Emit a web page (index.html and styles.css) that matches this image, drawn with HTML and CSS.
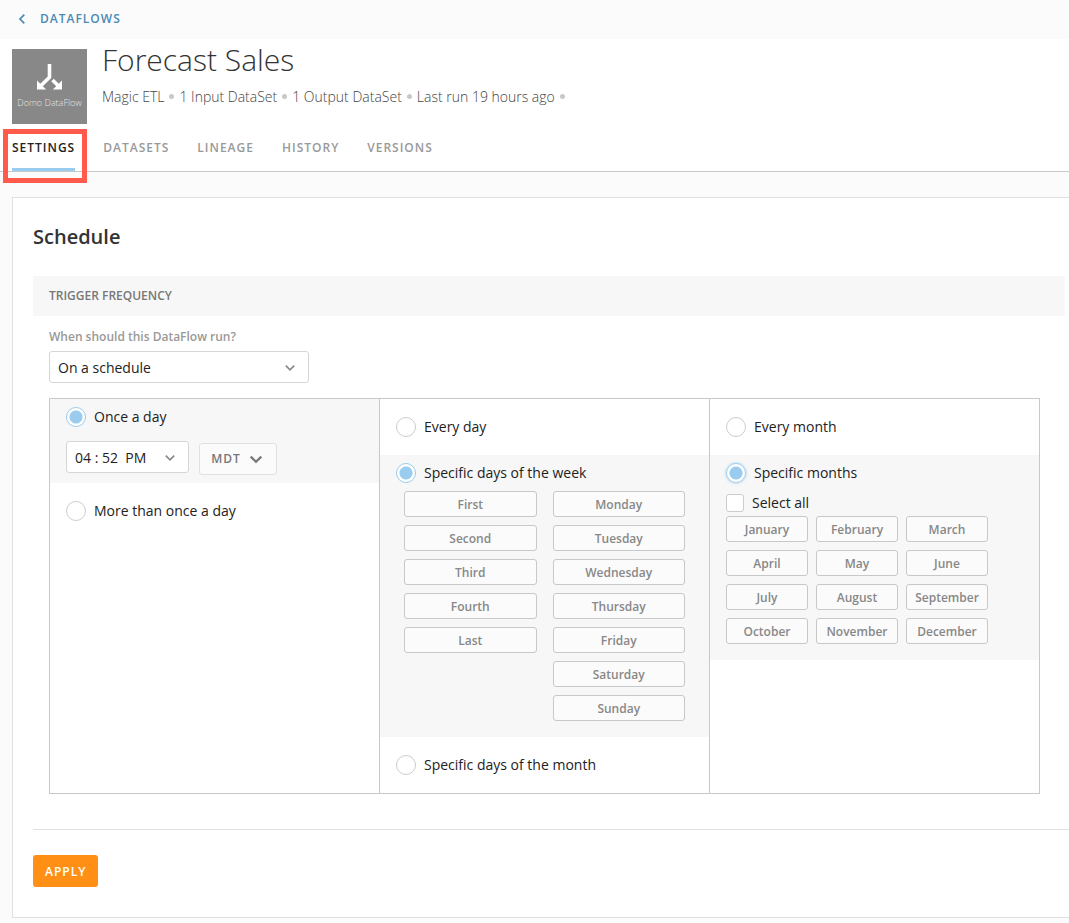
FILE: index.html
```html
<!DOCTYPE html>
<html lang="en">
<head>
<meta charset="utf-8">
<meta name="viewport" content="width=device-width, initial-scale=1">
<title>Forecast Sales</title>
<link rel="stylesheet" href="styles.css">
</head>
<body>
<header class="topbar">
  <a class="back" href="#">
    <svg width="8" height="12" viewBox="0 0 8 12" aria-hidden="true"><path d="M6.3 1.6 L2 6 L6.3 10.4" fill="none" stroke="currentColor" stroke-width="1.7"/></svg>
    DATAFLOWS
  </a>
</header>
<section class="masthead">
  <div class="identity">
    <div class="logo">
      <svg width="27" height="26" viewBox="0 0 27 26" aria-hidden="true">
        <path d="M13.5 0 V13.2 L4.5 22" fill="none" stroke="#fff" stroke-width="3.6"/>
        <path d="M16.5 16 L22.5 22" fill="none" stroke="#fff" stroke-width="3.6"/>
        <path d="M1 16.4 V25.5 H10.2 Z M26 16.4 V25.5 H16.8 Z" fill="#fff"/>
      </svg>
      <span class="logo-name">Domo DataFlow</span>
    </div>
    <div class="heading">
      <h1 class="title">Forecast Sales</h1>
      <ul class="facts">
        <li class="fact">Magic ETL</li>
        <li class="fact">1 Input DataSet</li>
        <li class="fact">1 Output DataSet</li>
        <li class="fact">Last run 19 hours ago</li>
      </ul>
    </div>
  </div>
  <nav class="tabs">
    <a class="tab tab-active" href="#">SETTINGS<span class="callout"></span></a>
    <a class="tab" href="#">DATASETS</a>
    <a class="tab" href="#">LINEAGE</a>
    <a class="tab" href="#">HISTORY</a>
    <a class="tab" href="#">VERSIONS</a>
  </nav>
</section>
<main class="card">
  <h2 class="card-title">Schedule</h2>
  <h3 class="band">TRIGGER FREQUENCY</h3>
  <form class="trigger">
    <label class="field-label" for="run">When should this DataFlow run?</label>
    <div class="picker picker-wide">
      <select class="select" id="run"><option>On a schedule</option></select>
      <svg class="chevron" width="10" height="8" viewBox="0 0 10 8" aria-hidden="true"><path d="M.8 1.6 L5 5.8 L9.2 1.6" fill="none" stroke="currentColor" stroke-width="1.6"/></svg>
    </div>
    <div class="schedule">
      <div class="column">
        <div class="option option-on">
          <label class="choice"><input class="radio" type="radio" name="times" checked>Once a day</label>
          <div class="time-row">
            <div class="picker picker-time">
              <select class="select" aria-label="Time"><option>04 : 52&nbsp; PM</option></select>
              <svg class="chevron" width="10" height="8" viewBox="0 0 10 8" aria-hidden="true"><path d="M.8 1.6 L5 5.8 L9.2 1.6" fill="none" stroke="currentColor" stroke-width="1.6"/></svg>
            </div>
            <button class="zone" type="button">MDT
              <svg width="14" height="9" viewBox="0 0 14 9" aria-hidden="true"><path d="M1.7 1.6 L7 6.8 L12.3 1.6" fill="none" stroke="currentColor" stroke-width="2.2"/></svg>
            </button>
          </div>
        </div>
        <div class="option">
          <label class="choice"><input class="radio" type="radio" name="times">More than once a day</label>
        </div>
      </div>
      <div class="column">
        <div class="option">
          <label class="choice"><input class="radio" type="radio" name="days">Every day</label>
        </div>
        <div class="option option-on option-grid">
          <label class="choice"><input class="radio" type="radio" name="days" checked>Specific days of the week</label>
          <div class="weeks">
            <div class="stack">
              <button class="chip" type="button">First</button>
              <button class="chip" type="button">Second</button>
              <button class="chip" type="button">Third</button>
              <button class="chip" type="button">Fourth</button>
              <button class="chip" type="button">Last</button>
            </div>
            <div class="stack">
              <button class="chip" type="button">Monday</button>
              <button class="chip" type="button">Tuesday</button>
              <button class="chip" type="button">Wednesday</button>
              <button class="chip" type="button">Thursday</button>
              <button class="chip" type="button">Friday</button>
              <button class="chip" type="button">Saturday</button>
              <button class="chip" type="button">Sunday</button>
            </div>
          </div>
        </div>
        <div class="option">
          <label class="choice"><input class="radio" type="radio" name="days">Specific days of the month</label>
        </div>
      </div>
      <div class="column">
        <div class="option">
          <label class="choice"><input class="radio" type="radio" name="months">Every month</label>
        </div>
        <div class="option option-on option-grid">
          <label class="choice"><input class="radio radio-focus" type="radio" name="months" checked>Specific months</label>
          <label class="choice select-all"><input class="checkbox" type="checkbox">Select all</label>
          <div class="months">
            <button class="chip" type="button">January</button>
            <button class="chip" type="button">February</button>
            <button class="chip" type="button">March</button>
            <button class="chip" type="button">April</button>
            <button class="chip" type="button">May</button>
            <button class="chip" type="button">June</button>
            <button class="chip" type="button">July</button>
            <button class="chip" type="button">August</button>
            <button class="chip" type="button">September</button>
            <button class="chip" type="button">October</button>
            <button class="chip" type="button">November</button>
            <button class="chip" type="button">December</button>
          </div>
        </div>
      </div>
    </div>
  </form>
  <footer class="actions"><button class="apply" type="button">APPLY</button></footer>
</main>
</body>
</html>
```

FILE: styles.css
```css
* { box-sizing: border-box; }
body {
  margin: 0;
  padding-bottom: 5px;
  background: #fbfbfb;
  color: #222;
  font: 14px/20px "Open Sans", "Noto Sans", sans-serif;
}
h1, h2, h3, ul { margin: 0; padding: 0; }
a { text-decoration: none; }
button, select, input { font: inherit; margin: 0; }

.topbar { height: 39px; padding: 0 18px 2px; display: flex; align-items: center; }
.back {
  display: flex;
  align-items: center;
  gap: 14px;
  color: #4a8ab5;
  font-size: 12px;
  font-weight: 600;
  letter-spacing: 1px;
}

.masthead { background: #fff; border-bottom: 1px solid #c8c8c8; padding: 0 12px; }
.identity { display: flex; gap: 15px; padding-top: 10px; }
.logo {
  flex: none;
  width: 75px;
  height: 75px;
  padding-top: 15px;
  display: flex;
  flex-direction: column;
  align-items: center;
  gap: 6px;
  background: #888;
}
.logo-name { color: #e4e4e4; font-size: 9px; font-weight: 300; line-height: 14px; white-space: nowrap; }
.heading { display: flex; flex-direction: column; gap: 6px; }
.title { margin-top: -10px; font-size: 30px; line-height: 42px; font-weight: 300; color: #333; }
.facts { display: flex; flex-wrap: wrap; list-style: none; font-weight: 300; color: #444; }
.fact { display: flex; align-items: center; }
.fact::after { content: ""; width: 5px; height: 5px; margin: 0 5px 2px; border-radius: 50%; background: #c8c8c8; }

.tabs { display: flex; gap: 28px; }
.tab {
  position: relative;
  padding: 14px 0 10px;
  border-bottom: 3px solid transparent;
  color: #999;
  font-size: 12px;
  font-weight: 600;
  letter-spacing: 1px;
}
.tab-active { color: #222; border-color: #99ccee; }
.callout { position: absolute; inset: 5px -12px -15px -9px; border: 5px solid #ff5a4c; }

.card { margin: 25px 0 0 12px; padding: 29px 0 30px 20px; background: #fff; border: 1px solid #e0e0e0; border-right: 0; }
.card-title { font-size: 20px; line-height: 20px; font-weight: 600; color: #333; }
.band {
  margin: 29px 4px 0 0;
  padding: 10px 16px;
  background: #f7f7f7;
  color: #777;
  font-size: 12px;
  font-weight: 600;
}
.trigger { padding: 11px 29px 35px 16px; }
.field-label { display: block; margin-bottom: 4px; color: #999; font-size: 12px; font-weight: 600; }

.picker { position: relative; height: 32px; }
.picker-wide { max-width: 260px; }
.picker-time { width: 123px; }
.select {
  appearance: none;
  width: 100%;
  height: 100%;
  padding: 2px 8px 0;
  border: 1px solid #d6d6d6;
  border-radius: 3px;
  background: #fff;
  color: #222;
}
.chevron { position: absolute; right: 14px; top: 13px; color: #888; pointer-events: none; }

.schedule {
  display: grid;
  grid-template-columns: repeat(3, 1fr);
  margin-top: 15px;
  border: 1px solid #c8c8c8;
  border-right: 0;
}
.column { border-right: 1px solid #c8c8c8; }
.option { padding: 18px 16px; }
.option-on { padding: 8px 16px; background: #f7f7f7; }
.option-grid { padding-bottom: 16px; }
.choice { display: flex; align-items: center; gap: 8px; }
.radio {
  appearance: none;
  flex: none;
  width: 20px;
  height: 20px;
  border: 1px solid #ccc;
  border-radius: 50%;
  background: #fff;
}
.radio:checked { border-color: #99ccee; background: radial-gradient(circle, #99ccee 0 6px, #fff 7px); }
.radio-focus { box-shadow: 0 0 3px #99ccee; }
.checkbox { appearance: none; width: 18px; height: 18px; border: 1px solid #ccc; border-radius: 3px; background: #fff; }
.select-all { margin-top: 10px; }

.time-row { display: flex; gap: 10px; margin-top: 14px; }
.zone {
  display: flex;
  align-items: center;
  justify-content: center;
  gap: 8px;
  width: 78px;
  height: 32px;
  margin-top: 2px;
  padding: 0 2px 0 0;
  border: 1px solid #e0e0e0;
  border-radius: 3px;
  background: #fbfbfb;
  color: #777;
  font-size: 12px;
  font-weight: 600;
  letter-spacing: 1px;
}
.weeks { display: grid; grid-template-columns: 1fr 1fr; gap: 16px; margin-top: 8px; padding: 0 8px; }
.stack { display: flex; flex-direction: column; gap: 8px; }
.months { display: grid; grid-template-columns: repeat(3, 82px); gap: 8px; margin-top: 3px; }
.chip {
  height: 26px;
  padding: 2px 0 0;
  border: 1px solid #c8c8c8;
  border-radius: 3px;
  background: #fbfbfb;
  color: #888;
  font-size: 12px;
  font-weight: 600;
}
.actions { padding-top: 25px; border-top: 1px solid #e0e0e0; }
.apply {
  height: 32px;
  padding: 2px 12px 0;
  border: 0;
  border-radius: 3px;
  background: #ff9015;
  color: #fff;
  font-size: 12px;
  font-weight: 600;
  letter-spacing: 1px;
}
```
